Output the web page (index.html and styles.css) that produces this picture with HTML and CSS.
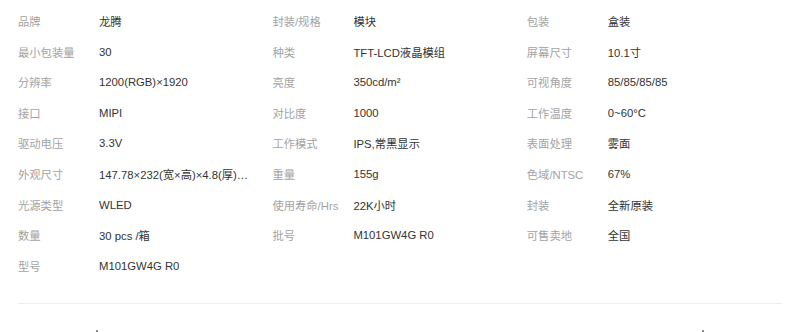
FILE: index.html
```html
<!DOCTYPE html>
<html lang="zh-CN">
<head>
<meta charset="utf-8">
<title>产品参数</title>
<link rel="stylesheet" href="styles.css">
</head>
<body>
<div class="page">
  <div class="specs">
    <div class="cell"><span class="label">品牌</span><span class="value">龙腾</span></div>
    <div class="cell"><span class="label">封装/规格</span><span class="value">模块</span></div>
    <div class="cell"><span class="label">包装</span><span class="value">盒装</span></div>

    <div class="cell"><span class="label">最小包装量</span><span class="value">30</span></div>
    <div class="cell"><span class="label">种类</span><span class="value">TFT-LCD液晶模组</span></div>
    <div class="cell"><span class="label">屏幕尺寸</span><span class="value">10.1寸</span></div>

    <div class="cell"><span class="label">分辨率</span><span class="value">1200(RGB)×1920</span></div>
    <div class="cell"><span class="label">亮度</span><span class="value">350cd/m²</span></div>
    <div class="cell"><span class="label">可视角度</span><span class="value">85/85/85/85</span></div>

    <div class="cell"><span class="label">接口</span><span class="value">MIPI</span></div>
    <div class="cell"><span class="label">对比度</span><span class="value">1000</span></div>
    <div class="cell"><span class="label">工作温度</span><span class="value">0~60°C</span></div>

    <div class="cell"><span class="label">驱动电压</span><span class="value">3.3V</span></div>
    <div class="cell"><span class="label">工作模式</span><span class="value">IPS,常黑显示</span></div>
    <div class="cell"><span class="label">表面处理</span><span class="value">雾面</span></div>

    <div class="cell"><span class="label">外观尺寸</span><span class="value">147.78×232(宽×高)×4.8(厚)mm</span></div>
    <div class="cell"><span class="label">重量</span><span class="value">155g</span></div>
    <div class="cell"><span class="label">色域/NTSC</span><span class="value">67%</span></div>

    <div class="cell"><span class="label">光源类型</span><span class="value">WLED</span></div>
    <div class="cell"><span class="label">使用寿命/Hrs</span><span class="value">22K小时</span></div>
    <div class="cell"><span class="label">封装</span><span class="value">全新原装</span></div>

    <div class="cell"><span class="label">数量</span><span class="value">30 pcs /箱</span></div>
    <div class="cell"><span class="label">批号</span><span class="value">M101GW4G R0</span></div>
    <div class="cell"><span class="label">可售卖地</span><span class="value">全国</span></div>

    <div class="cell"><span class="label">型号</span><span class="value">M101GW4G R0</span></div>
  </div>
  <div class="divider"></div>
  <div class="footer">
    <span class="tick"></span>
    <span class="tick"></span>
  </div>
</div>
</body>
</html>
```

FILE: styles.css
```css
html, body {
  margin: 0;
  padding: 0;
  background: #ffffff;
}

body {
  font-family: "Liberation Sans", Arial, "Noto Sans CJK SC", sans-serif;
  font-size: 11.3px;
  color: #333333;
}

.page {
  width: 800px;
  height: 332px;
  overflow: hidden;
}

.specs {
  display: grid;
  grid-template-columns: repeat(3, 254.4px);
  grid-auto-rows: 30.6px;
  padding: 5.7px 0 0 18px;
}

.cell {
  display: flex;
  align-items: center;
  white-space: nowrap;
}

.label {
  flex: 0 0 81px;
  color: #a3a3a3;
}

.value {
  width: 150px;
  overflow: hidden;
  text-overflow: ellipsis;
  color: #333333;
}

.divider {
  margin: 22px 18px 0 18px;
  height: 1px;
  background: #eeeeee;
}

.footer {
  display: flex;
  justify-content: space-between;
  padding: 26px 96px 0 96px;
}

.tick {
  width: 2px;
  height: 2px;
  background: #8a8a8a;
}
```
